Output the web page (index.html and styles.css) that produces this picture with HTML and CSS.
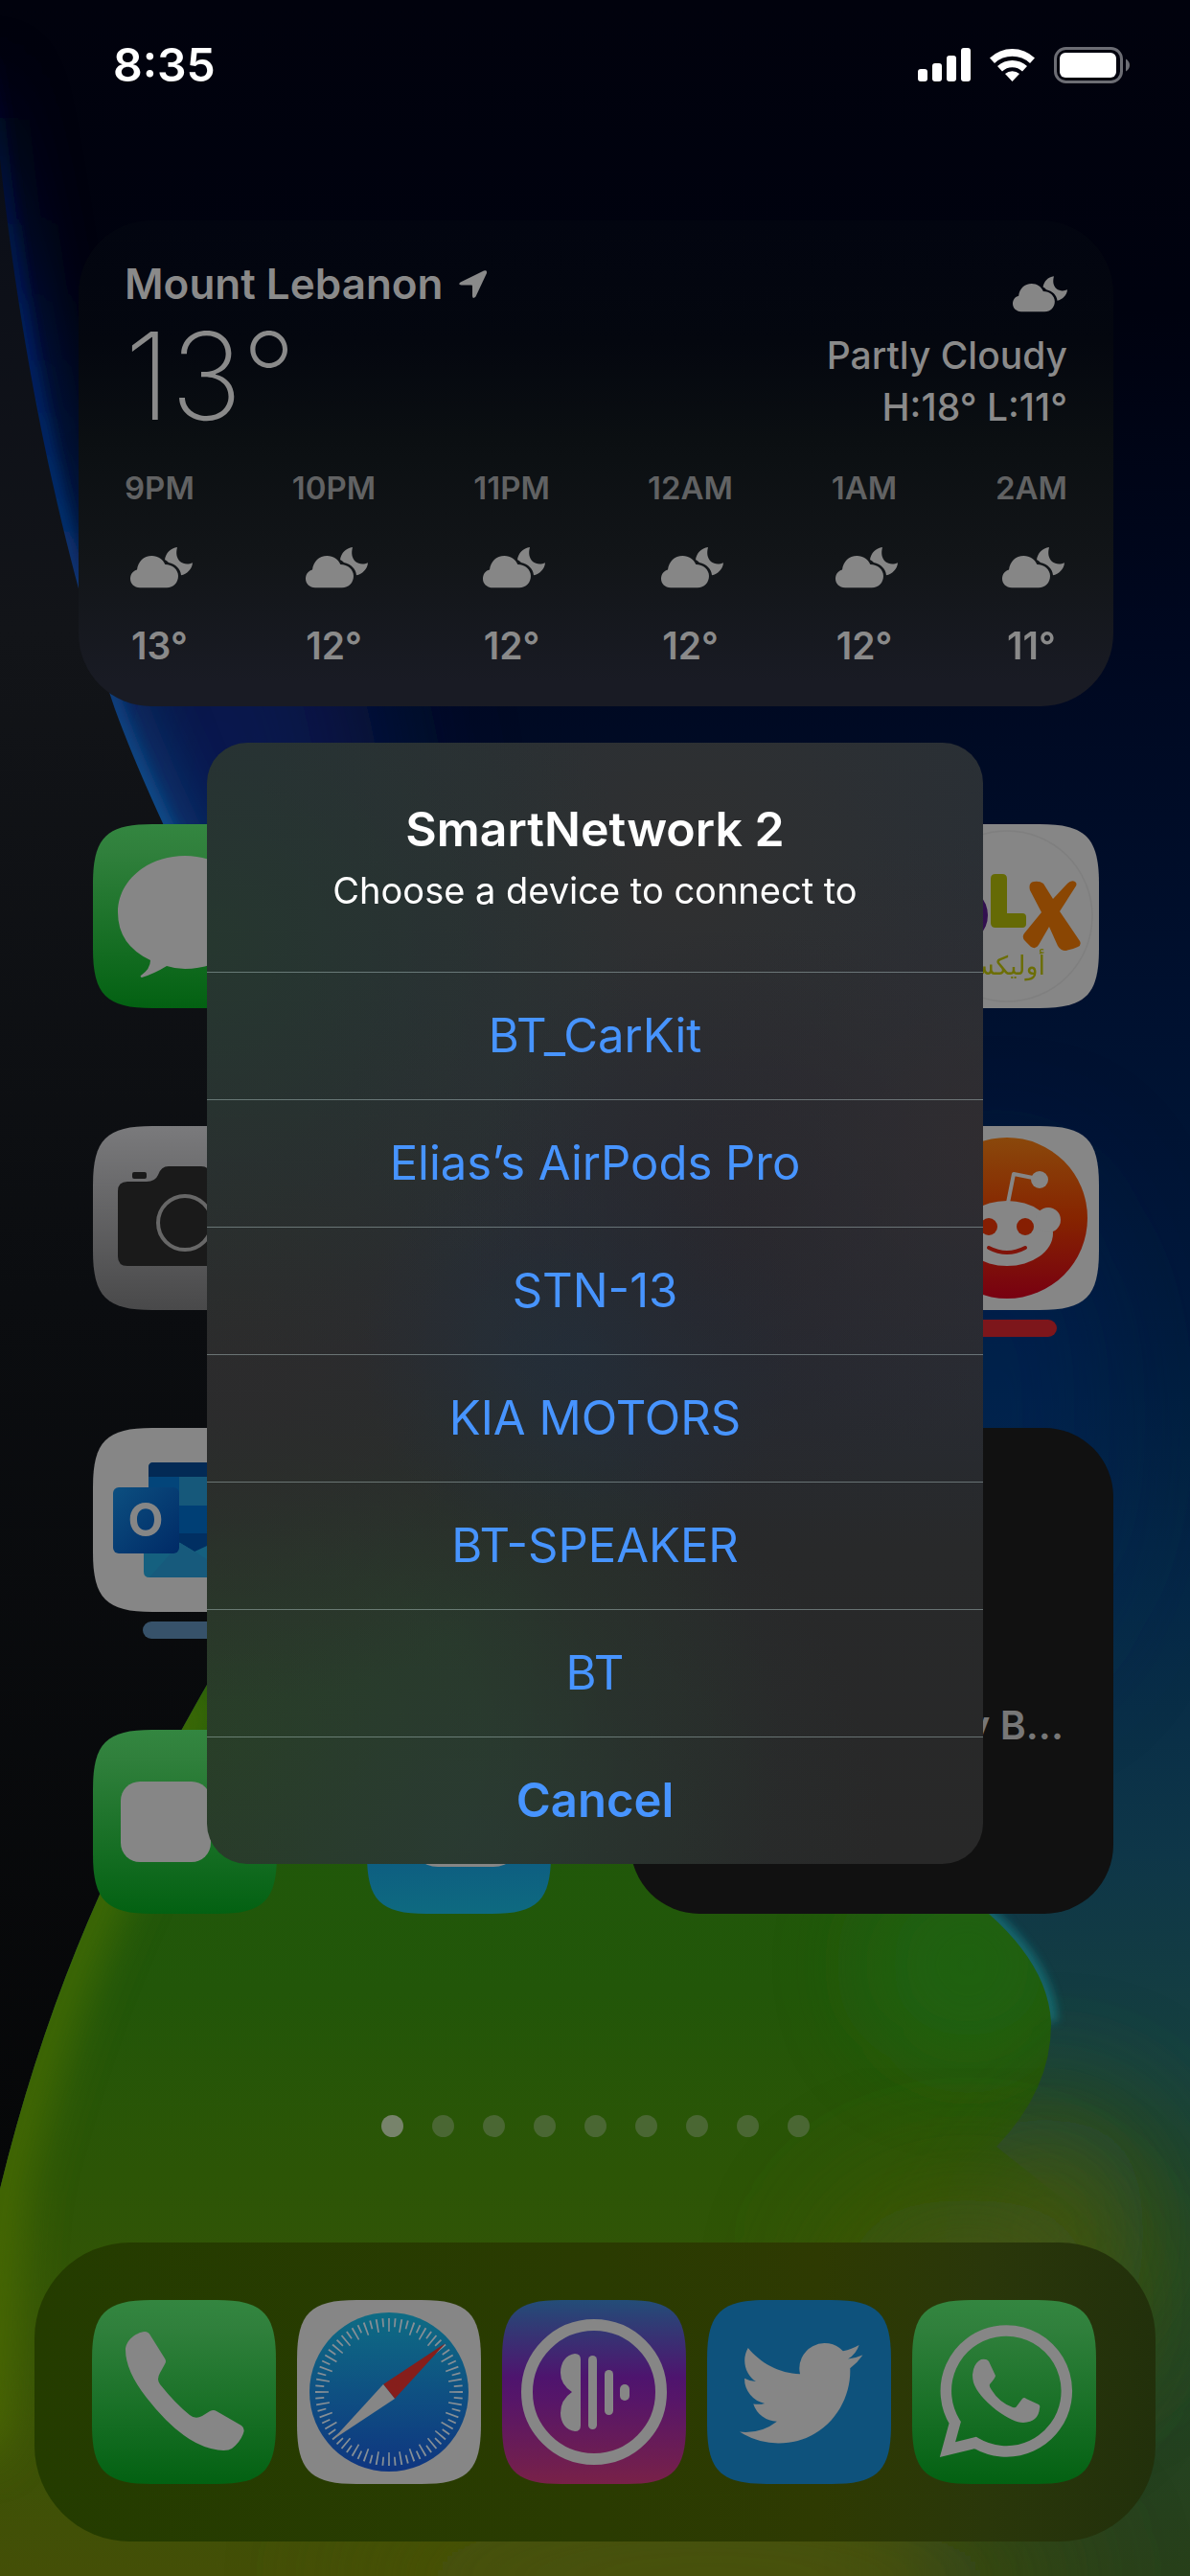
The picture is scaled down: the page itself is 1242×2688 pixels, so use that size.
FILE: index.html
```html
<!DOCTYPE html>
<html lang="en">
<head>
<meta charset="utf-8">
<meta name="viewport" content="width=device-width, initial-scale=1">
<title>SmartNetwork 2</title>
<link rel="stylesheet" href="styles.css">
</head>
<body>
<svg class="wallpaper" viewBox="0 0 1242 2688" preserveAspectRatio="xMidYMid slice" aria-hidden="true">
  <defs>
    <linearGradient id="sky" x1="0" y1="0" x2="0" y2="1">
      <stop offset="0" stop-color="#01020d"/>
      <stop offset=".12" stop-color="#00020f"/>
      <stop offset=".25" stop-color="#000820"/>
      <stop offset=".4" stop-color="#001130"/>
      <stop offset=".52" stop-color="#001a3c"/>
      <stop offset=".62" stop-color="#052846"/>
      <stop offset=".72" stop-color="#0e3648"/>
      <stop offset=".8" stop-color="#16403f"/>
      <stop offset=".88" stop-color="#1f4529"/>
      <stop offset="1" stop-color="#28401a"/>
    </linearGradient>
    <linearGradient id="shade" x1="0" y1="0" x2="0" y2="1">
      <stop offset="0" stop-color="#040713"/>
      <stop offset=".12" stop-color="#0c0f18"/>
      <stop offset=".3" stop-color="#121418"/>
      <stop offset=".6" stop-color="#0b0d10"/>
      <stop offset="1" stop-color="#060708"/>
    </linearGradient>
    <linearGradient id="edge" gradientUnits="userSpaceOnUse" x1="0" y1="40" x2="0" y2="900">
      <stop offset="0" stop-color="#04124a" stop-opacity="0"/>
      <stop offset=".35" stop-color="#041c5c"/>
      <stop offset="1" stop-color="#0b4f8c"/>
    </linearGradient>
    <linearGradient id="leaf" gradientUnits="userSpaceOnUse" x1="0" y1="1750" x2="0" y2="2688">
      <stop offset="0" stop-color="#1f5a0b"/>
      <stop offset=".35" stop-color="#225609"/>
      <stop offset=".55" stop-color="#2c5506"/>
      <stop offset=".75" stop-color="#365406"/>
      <stop offset="1" stop-color="#444f07"/>
    </linearGradient>
    <filter id="b5" x="-50%" y="-50%" width="200%" height="200%"><feGaussianBlur stdDeviation="5"/></filter>
    <filter id="b8" x="-50%" y="-50%" width="200%" height="200%"><feGaussianBlur stdDeviation="7"/></filter>
    <filter id="b30" x="-80%" y="-50%" width="260%" height="200%"><feGaussianBlur stdDeviation="26"/></filter>
    <filter id="b45" x="-50%" y="-50%" width="200%" height="200%"><feGaussianBlur stdDeviation="45"/></filter>
    <filter id="b70" x="-60%" y="-60%" width="220%" height="220%"><feGaussianBlur stdDeviation="70"/></filter>
    <mask id="leafFade" maskUnits="userSpaceOnUse" x="0" y="1400" width="1242" height="1300">
      <path d="M-300 1100H1700V1950L1240 2110L1090 2240L1000 2330L960 2420V3000H-300Z" fill="#fff" filter="url(#b45)"/>
    </mask>
    <clipPath id="leafClip"><path d="M420 1500Q250 1690 216 1758Q146 1880 104 1977Q40 2120 0 2284V2688H1242V2400L1040 2240Q1098 2180 1097 2110Q1094 2052 1032 1997Q900 1800 700 1600Z"/></clipPath>
  </defs>
  <rect width="1242" height="2688" fill="url(#sky)"/>
  <ellipse cx="230" cy="880" rx="170" ry="330" fill="#081f5c" opacity=".75" filter="url(#b70)"/>
  <ellipse cx="1040" cy="1480" rx="120" ry="260" fill="#00285c" opacity=".5" filter="url(#b70)"/>
  <ellipse cx="1090" cy="2330" rx="110" ry="130" fill="#42590f" opacity=".9" filter="url(#b70)"/>
  <path d="M-16 -40C4 360 80 620 120 740Q160 850 260 1040" fill="none" stroke="url(#edge)" stroke-width="70" opacity=".55" filter="url(#b30)"/>
  <path d="M-16 -40C4 360 80 620 120 740Q160 850 260 1040" fill="none" stroke="url(#edge)" stroke-width="20" filter="url(#b8)"/>
  <path d="M-16 -40C4 360 80 620 120 740Q160 850 260 1040L420 1300V1500Q250 1690 216 1758Q146 1880 104 1977Q40 2120 0 2284H-16Z" fill="url(#shade)"/>
  <path d="M960 1930L1032 1997Q1094 2052 1097 2110" fill="none" stroke="#14747a" stroke-width="14" opacity=".75" filter="url(#b5)"/>
  <g clip-path="url(#leafClip)">
    <g mask="url(#leafFade)">
      <rect y="1400" width="1242" height="1288" fill="url(#leaf)"/>
      <ellipse cx="1010" cy="2050" rx="110" ry="110" fill="#1b6b12" opacity=".55" filter="url(#b45)"/>
    </g>
    <path d="M216 1758Q146 1880 104 1977Q40 2120 0 2284L-20 2560" fill="none" stroke="#5b7a04" stroke-width="40" opacity=".75" filter="url(#b30)"/>
  </g>
  <ellipse cx="1010" cy="2400" rx="140" ry="110" fill="#4b560c" opacity=".8" filter="url(#b70)"/>
  <ellipse cx="740" cy="2690" rx="380" ry="70" fill="#4c520a" opacity=".8" filter="url(#b70)"/>
</svg>

<svg width="0" height="0" class="defs" aria-hidden="true">
  <defs>
    <path id="tile" d="M0 62C0 14 14 0 62 0H130C178 0 192 14 192 62V130C192 178 178 192 130 192H62C14 192 0 178 0 130Z"/>
    <linearGradient id="green" x1="0" y1="0" x2="0" y2="1"><stop offset="0" stop-color="#338640"/><stop offset=".15" stop-color="#30803c"/><stop offset="1" stop-color="#036112"/></linearGradient>
    <linearGradient id="silver" x1="0" y1="0" x2="0" y2="1"><stop offset="0" stop-color="#7a7a7c"/><stop offset="1" stop-color="#49494a"/></linearGradient>
    <linearGradient id="ember" x1="0" y1="0" x2="0" y2="1"><stop offset="0" stop-color="#8a480b"/><stop offset=".5" stop-color="#862400"/><stop offset="1" stop-color="#780011"/></linearGradient>
    <linearGradient id="sea" x1="0" y1="0" x2="0" y2="1"><stop offset="0" stop-color="#0e6c84"/><stop offset="1" stop-color="#0f3580"/></linearGradient>
    <linearGradient id="plum" x1="0" y1="0" x2="0" y2="1"><stop offset="0" stop-color="#234d78"/><stop offset=".42" stop-color="#4e146e"/><stop offset=".55" stop-color="#571668"/><stop offset="1" stop-color="#782148"/></linearGradient>
    <linearGradient id="azure" x1="0" y1="0" x2="0" y2="1"><stop offset="0" stop-color="#0c4084"/><stop offset="1" stop-color="#0e6a80"/></linearGradient>
    <linearGradient id="oblock" x1="0" y1="0" x2="1" y2="1"><stop offset="0" stop-color="#0c4f80"/><stop offset="1" stop-color="#002a66"/></linearGradient>
    <symbol id="cloud-moon" viewBox="0 0 65 43">
      <path d="M10 42.300C4 42 0 38 0 33C0 28 3 24.500 7 23.500C8 15 14 9 22.500 9C29 9 34 12.500 36.300 18C44 18 50 23.500 50 30C50 37 45 42.300 38 42.300Z"/>
      <path d="M49 0C42 1 37 6 36 13Q38 14 40 16C47 17.500 52.500 22.500 53 29.300C59 28 64.500 23 65 16.200C61 18 55.500 18 52 15C48 11 47.500 6 49 0Z"/>
    </symbol>
  </defs>
</svg>

<div class="home">
  <header class="status">
    <time class="clock">8:35</time>
    <svg class="indicators" viewBox="0 0 222 38" role="img" aria-label="Signal, Wi-Fi and battery">
      <g fill="#fff">
        <rect x="0" y="23" width="10" height="13" rx="3"/><rect x="15" y="17" width="10" height="19" rx="3"/><rect x="30" y="9" width="10" height="27" rx="3"/><rect x="45" y="1" width="10" height="35" rx="3"/>
        <path d="M75 11.500A34 34 0 0 1 122 11.500L117 17A27 27 0 0 0 80 17Z"/>
        <path d="M83 20A23 23 0 0 1 114 20L109 25.500A15 15 0 0 0 88 25.500Z"/>
        <path d="M91 28A11.500 11.500 0 0 1 106 28L98.500 36Z"/>
        <rect x="148" y="6" width="59" height="26" rx="6"/>
      </g>
      <rect x="143.500" y="1.500" width="69" height="35" rx="11" fill="none" stroke="#6c6d74" stroke-width="3"/>
      <path d="M217 12.500Q221 15 221 19T217 25.500Z" fill="#6c6d74"/>
    </svg>
  </header>

  <main class="grid">
    <section class="widget weather" aria-label="Weather">
      <div class="now">
        <div>
          <h2 class="place">Mount Lebanon
            <svg class="arrow" viewBox="0 0 29 29" aria-hidden="true"><path d="M1.500 12.500L26 .5Q29.500-.5 29 3L17.500 27.500Q14.500 30.500 14 27V16.500Q14 15.500 13 15.500H2.500Q-1.500 15 1.500 12.500Z" fill="currentColor"/></svg>
          </h2>
          <p class="temp">13°</p>
        </div>
        <div class="summary">
          <svg class="sky" aria-hidden="true"><use href="#cloud-moon"/></svg>
          <p>Partly Cloudy</p>
          <p>H:18° L:11°</p>
        </div>
      </div>
      <ol class="hours">
        <li><span class="hour">9PM</span><svg class="sky" aria-hidden="true"><use href="#cloud-moon"/></svg><span>13°</span></li>
        <li><span class="hour">10PM</span><svg class="sky" aria-hidden="true"><use href="#cloud-moon"/></svg><span>12°</span></li>
        <li><span class="hour">11PM</span><svg class="sky" aria-hidden="true"><use href="#cloud-moon"/></svg><span>12°</span></li>
        <li><span class="hour">12AM</span><svg class="sky" aria-hidden="true"><use href="#cloud-moon"/></svg><span>12°</span></li>
        <li><span class="hour">1AM</span><svg class="sky" aria-hidden="true"><use href="#cloud-moon"/></svg><span>12°</span></li>
        <li><span class="hour">2AM</span><svg class="sky" aria-hidden="true"><use href="#cloud-moon"/></svg><span>11°</span></li>
      </ol>
    </section>

    <a class="app first" href="#messages" aria-label="Messages">
      <svg viewBox="0 0 192 192"><use href="#tile" fill="url(#green)"/><path d="M96 33C135 33 166 59 166 92S135 151 96 151Q86 151 77 148Q64 156 51 160Q49 159 50 158Q60 151 60 142Q26 126 26 92C26 59 57 33 96 33Z" fill="#868686"/></svg>
    </a>
    <a class="app last" href="#olx" aria-label="OLX">
      <svg viewBox="0 0 192 192"><use href="#tile" fill="#868686"/><circle cx="96" cy="96" r="89" fill="none" stroke="#7f7f7f" stroke-width="1.500"/>
        <circle cx="46" cy="95" r="30" fill="#32104f"/>
        <path d="M84 52H91Q96 52 96 57V93H112Q116 93 116 97V104Q116 108 112 108H84Q79 108 79 103V57Q79 52 84 52Z" fill="#656a05"/>
        <path d="M124 60Q130 59 134 62L144 78L159 62Q163 58 167 60Q170 62 167 66L151 91L172 122Q174 126 170 128Q164 131 157 132Q152 132 149 127L140 107L129 126Q126 131 121 128L115 122Q111 118 114 114L132 92L120 69Q118 61 124 60Z" fill="#8a4603"/>
        <text class="olx-text" x="136" y="157" direction="rtl" fill="#6c6e05">أوليكس</text></svg>
    </a>

    <a class="app first" href="#camera" aria-label="Camera">
      <svg viewBox="0 0 192 192"><use href="#tile" fill="url(#silver)"/><rect x="41" y="48" width="15" height="7" rx="2" fill="#1a1a1a"/><path d="M36 58H56Q65 58 68 51Q71 42 79 42H113Q121 42 124 51Q127 58 136 58H156Q166 58 166 68V136Q166 146 156 146H36Q26 146 26 136V68Q26 58 36 58Z" fill="#1a1a1a"/><circle cx="96" cy="101" r="28" fill="none" stroke="#676767" stroke-width="4"/></svg>
    </a>
    <a class="app last" href="#reddit" aria-label="Reddit">
      <svg viewBox="0 0 192 192"><use href="#tile" fill="#868686"/><circle cx="96" cy="96" r="84" fill="url(#ember)"/><g fill="#868686"><ellipse cx="96" cy="112" rx="48" ry="34"/><circle cx="139" cy="98" r="13"/><circle cx="53" cy="98" r="13"/><circle cx="130" cy="56" r="9"/></g><path d="M97 80L103 50L128 55" fill="none" stroke="#868686" stroke-width="4" stroke-linejoin="round"/><g fill="#861e02"><circle cx="77" cy="105" r="9"/><circle cx="115" cy="105" r="9"/></g><path d="M77 127Q96 137 115 127" fill="none" stroke="#80140a" stroke-width="4" stroke-linecap="round"/></svg>
      <span class="tag red"></span>
    </a>

    <a class="app first" href="#outlook" aria-label="Outlook">
      <svg viewBox="0 0 192 192"><use href="#tile" fill="#868686"/>
        <rect x="58" y="36" width="100" height="90" rx="5" fill="#03457a"/><path d="M58 51V41Q58 36 63 36H158V51Z" fill="#032a55"/><rect x="90" y="51" width="34" height="30" fill="#16587a"/><path d="M90 81H124V110H90Z" fill="#003f75"/><path d="M90 110H124V130H90Z" fill="#012f62"/>
        <path d="M53 100L91 120L106 129L130 118V156H59Q53 156 53 150Z" fill="#15607f"/><path d="M91 120L106 129L130 144V156H59Z" fill="#175a7c"/>
        <rect x="21" y="62" width="69" height="69" rx="6" fill="url(#oblock)"/>
        <text class="outlook-o" x="55" y="113" text-anchor="middle" fill="#868686">O</text></svg>
      <span class="tag slate"></span>
    </a>
    <section class="widget note" aria-label="Widget"><p>y B...</p></section>

    <a class="app first" href="#facetime" aria-label="FaceTime">
      <svg viewBox="0 0 192 192"><use href="#tile" fill="url(#green)"/><rect x="29" y="54" width="94" height="84" rx="20" fill="#868686"/></svg>
    </a>
    <a class="app second" href="#weather" aria-label="Weather">
      <svg viewBox="0 0 192 192"><use href="#tile" fill="url(#azure)"/><rect x="44" y="80" width="118" height="63" rx="30" fill="#868686"/></svg>
    </a>
  </main>

  <nav class="dots" aria-label="Pages"><i class="on"></i><i></i><i></i><i></i><i></i><i></i><i></i><i></i><i></i></nav>

  <footer class="dock">
    <a class="app" href="#phone" aria-label="Phone">
      <svg viewBox="0 0 192 192"><use href="#tile" fill="url(#green)"/><path d="M35 52C35 43 45 34 55 33Q59 33 61 37L76 61Q78 64 76 67L71 76Q67 83 71 88Q87 108 102 120Q108 125 115 121L123 116Q127 114 130 116L156 131Q160 134 158 139Q155 148 146 155Q140 159 124 155Q92 147 57 102Q35 74 35 52Z" fill="#868686"/></svg>
    </a>
    <a class="app" href="#safari" aria-label="Safari">
      <svg viewBox="0 0 192 192"><use href="#tile" fill="#868686"/><circle cx="96" cy="96" r="83" fill="url(#sea)"/><g fill="none" stroke="#868f96"><circle cx="96" cy="96" r="70" stroke-width="14" pathLength="360" stroke-dasharray="1.400 8.600" stroke-dashoffset=".7"/><circle cx="96" cy="96" r="72.500" stroke-width="9" pathLength="360" stroke-dasharray="1.400 8.600" stroke-dashoffset="-4.300"/></g><path d="M155 45L90 88L102 103Z" fill="#861e1b"/><path d="M37 146L90 88L102 103Z" fill="#868686"/></svg>
    </a>
    <a class="app" href="#anghami" aria-label="Anghami">
      <svg viewBox="0 0 192 192"><use href="#tile" fill="url(#plum)"/><circle cx="96" cy="96" r="70" fill="none" stroke="#868686" stroke-width="12"/><g fill="#868686"><path d="M76 56Q82 56 82 62V131Q82 137 76 137C67 136 61 128 61 118Q61 104 73 96Q61 88 61 76C61 65 67 57 76 56Z"/><rect x="90" y="58" width="9" height="77" rx="4.500"/><rect x="107" y="73" width="9" height="47" rx="4.500"/><rect x="123" y="88" width="10" height="17" rx="5"/></g></svg>
    </a>
    <a class="app" href="#twitter" aria-label="Twitter">
      <svg viewBox="0 0 192 192"><use href="#tile" fill="#0e527c"/><path transform="translate(34 33) scale(5.350)" fill="#868686" d="M23.953 4.570a10 10 0 01-2.825.775 4.958 4.958 0 002.163-2.723c-.951.555-2.005.959-3.127 1.184a4.920 4.920 0 00-8.384 4.482C7.690 8.095 4.067 6.130 1.640 3.162a4.822 4.822 0 00-.666 2.475c0 1.710.870 3.213 2.188 4.096a4.904 4.904 0 01-2.228-.616v.060a4.923 4.923 0 003.946 4.827 4.996 4.996 0 01-2.212.085 4.936 4.936 0 004.604 3.417 9.867 9.867 0 01-6.102 2.105c-.390 0-.779-.023-1.170-.067a13.995 13.995 0 007.557 2.209c9.053 0 13.998-7.496 13.998-13.985 0-.210 0-.420-.015-.630A9.935 9.935 0 0024 4.590z"/></svg>
    </a>
    <a class="app" href="#whatsapp" aria-label="WhatsApp">
      <svg viewBox="0 0 192 192"><use href="#tile" fill="url(#green)"/><path d="M44.700 128L37 156L66 149A63 63 0 1 0 44.700 128Z" fill="none" stroke="#868686" stroke-width="11.500"/><path d="M63 78Q64 66 72 62Q78 61 80 64L87 79Q87 81 81 88Q80 90 83 94Q91 107 105 112Q108 113 109 111L115 103Q117 101 119 103L132 109Q134 110 133 113Q132 127 116 128Q106 128 88 115Q68 99 64 86Q63 82 63 78Z" fill="#868686"/></svg>
    </a>
  </footer>
</div>

<div class="overlay">
  <div class="alert" role="dialog" aria-modal="true" aria-labelledby="alert-title" aria-describedby="alert-text">
    <div class="alert-head">
      <h1 id="alert-title">SmartNetwork 2</h1>
      <p id="alert-text">Choose a device to connect to</p>
    </div>
    <button type="button">BT_CarKit</button>
    <button type="button">Elias’s AirPods Pro</button>
    <button type="button">STN-13</button>
    <button type="button">KIA MOTORS</button>
    <button type="button">BT-SPEAKER</button>
    <button type="button">BT</button>
    <button type="button" class="cancel">Cancel</button>
  </div>
</div>
</body>
</html>
```
FILE: styles.css
```css
* { box-sizing: border-box; }

body {
  margin: 0;
  background: #01020d;
  color: #8a8a8a;
  font-family: Inter, "Liberation Sans", sans-serif;
}

h1, h2, p, ol { margin: 0; padding: 0; font-weight: inherit; }
ol { list-style: none; }
svg { display: block; }
.defs { position: absolute; }

.wallpaper {
  position: fixed;
  inset: 0;
  width: 100%;
  height: 100%;
}

.home {
  position: relative;
  display: flex;
  flex-direction: column;
  min-height: 100vh;
  padding-bottom: 36px;
}

/* Status bar */
.status {
  display: flex;
  justify-content: space-between;
  align-items: flex-start;
  padding: 38px 62px 0 118px;
  min-height: 230px;
  color: #fff;
}
.clock { font-size: 48px; line-height: 60px; font-weight: 600; }
.indicators { width: 222px; height: 38px; margin-top: 11px; }

/* App grid */
.grid {
  display: grid;
  grid-template-columns: repeat(4, 1fr);
  grid-auto-rows: 192px;
  grid-template-rows: auto;
  row-gap: 123px;
  padding: 0 48px 0 50px;
  justify-items: center;
}
.app { display: block; width: 192px; height: 192px; }
.app > svg { width: 192px; height: 192px; }
.first { grid-column: 1; }
.second { grid-column: 2; }
.last { grid-column: 4; }
.tag { display: block; height: 18px; border-radius: 9px; margin: 10px auto 0; }
.red { width: 104px; background: #7d161b; }
.slate { width: 88px; background: #37526a; }
.olx-text { font: 27px "DejaVu Sans", sans-serif; }
.outlook-o { font: 700 48px Inter, sans-serif; }

.widget {
  justify-self: stretch;
  border-radius: 76px;
  margin: 0 32px;
}
.weather {
  grid-column: 1 / -1;
  padding: 40px 48px 39px 48px;
  background: linear-gradient(#020510 0%, #04070f 25%, #0b0f12 45%, #121518 70%, #191b24 95%);
}
.now { display: flex; justify-content: space-between; }
.place {
  display: flex;
  align-items: center;
  gap: 16px;
  font-size: 44px;
  line-height: 52px;
  font-weight: 600;
}
.arrow { width: 29px; height: 29px; }
.temp { margin-top: 10px; font-size: 126px; line-height: 120px; font-weight: 200; }
.summary {
  padding-top: 18px;
  text-align: right;
  font-size: 39px;
  line-height: 54px;
  font-weight: 500;
}
.sky { width: 65px; height: 43px; fill: #868686; }
.summary .sky { width: 57px; height: 38px; margin: 0 0 18px auto; }
.hours {
  display: flex;
  justify-content: space-between;
  margin-top: 37px;
  font-size: 39px;
  line-height: 48px;
  font-weight: 600;
}
.hours li { display: flex; flex-direction: column; align-items: center; }
.hours .sky { margin: 42px 0 36px 5px; }
.hour { font-size: 33px; line-height: 40px; color: #616263; }

.note {
  grid-column: 3 / -1;
  grid-row: 4 / span 2;
  margin-left: 36px;
  padding: 286px 52px 0;
  border-radius: 72px;
  background: #111;
  color: #777;
  text-align: right;
  font-size: 41px;
  line-height: 48px;
  font-weight: 600;
}

/* Page dots */
.dots {
  display: flex;
  justify-content: center;
  gap: 30px;
  margin: 210px 0 110px;
}
.dots i { width: 23px; height: 23px; border-radius: 50%; background: #4a6733; }
.dots .on { background: #77836b; }

/* Dock */
.dock {
  display: flex;
  justify-content: space-between;
  margin: 0 36px;
  padding: 60px 62px 60px 60px;
  border-radius: 100px;
  background: linear-gradient(to right, #243c00 0%, #2a3b01 50%, #2e3a02 70%, #2a370a 85%, #22300b 100%);
}

/* Alert */
.overlay {
  position: fixed;
  inset: 0;
  display: grid;
  place-items: center;
  padding: 32px 24px 0;
}
.alert {
  width: 100%;
  max-width: 810px;
  overflow: hidden;
  border-radius: 42px;
  background:
    radial-gradient(circle at 0% 18%, #26372f, #26372f66 18%, transparent 36%),
    radial-gradient(circle at 100% 36%, #312c2fcc, #312c2f55 14%, transparent 30%),
    radial-gradient(circle at 70% 42%, #27242aaa, #27242a55 18%, transparent 34%),
    radial-gradient(circle at 62% 12%, #31302fcc, #31302f55 20%, transparent 40%),
    radial-gradient(circle at 48% 54%, #22303ccc, #22303c55 16%, transparent 30%),
    radial-gradient(circle at 4% 52%, #2c2b2c, #2c2b2c99 20%, transparent 40%),
    radial-gradient(circle at 34% 98%, #2b3b3899, #2b3b3844 16%, transparent 34%),
    radial-gradient(ellipse 70% 40% at 4% 90%, #283f25, #283c28dd 45%, #28342888 70%, transparent 100%),
    linear-gradient(#282f36 0%, #282e36 35%, #272b33 56%, #28292a 72%, #282828 100%);
}
.alert-head {
  padding: 60px 32px 59px;
  text-align: center;
  color: #fff;
}
.alert-head h1 { font-size: 50px; line-height: 60px; font-weight: 600; }
.alert-head p { margin-top: 8px; font-size: 38px; line-height: 52px; }
.alert button {
  display: block;
  width: 100%;
  height: 133px;
  padding: 0;
  border: 0;
  border-top: 1px solid rgba(210, 235, 235, .38);
  background: none;
  color: #4794ff;
  font-family: inherit;
  font-size: 49px;
  line-height: 60px;
}
.alert .cancel { font-weight: 600; }
```
